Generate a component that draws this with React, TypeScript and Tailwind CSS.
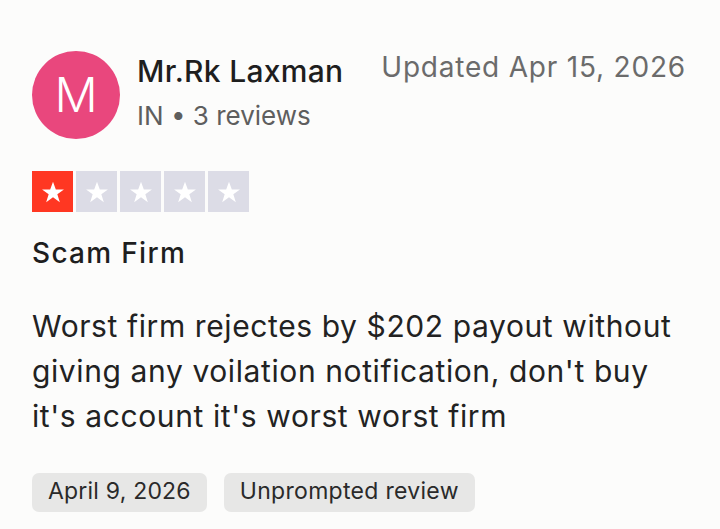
function Stars({ rating }: { rating: number }) {
  return (
    <div className="flex gap-[3px]">
      {[1, 2, 3, 4, 5].map((i) => (
        <div
          key={i}
          className={`flex h-[41px] w-[41px] items-center justify-center ${
            i <= rating ? "bg-[#ff3722]" : "bg-[#dcdce6]"
          }`}
        >
          <svg viewBox="0 0 24 24" className="h-[26px] w-[26px]" fill="#ffffff">
            <path d="M12 2.5l2.6 7.1h7.5l-6.1 4.5 2.3 7.3L12 16.9l-6.3 4.5 2.3-7.3-6.1-4.5h7.5z" />
          </svg>
        </div>
      ))}
    </div>
  );
}

export default function App() {
  return (
    <div
      className="h-[529px] w-[720px] overflow-hidden bg-[#fcfcfb] px-8 pt-[51px] text-[#1e1e1e]"
      style={{ fontFamily: "Inter, 'Noto Sans', sans-serif" }}
    >
      {/* Header */}
      <div className="flex items-start">
        <div className="flex h-[88px] w-[88px] shrink-0 items-center justify-center rounded-full bg-[#e9477d] text-[48px] font-light leading-none text-white">
          M
        </div>
        <div className="ml-[17px] flex flex-col pt-[2px]">
          <span className="text-[30px] font-medium leading-[36px] tracking-[0.3px]">Mr.Rk Laxman</span>
          <span className="mt-[12px] text-[26px] leading-[30px] text-[#5e5e5e]">IN • 3 reviews</span>
        </div>
        <span className="ml-auto mr-[2px] text-[28px] leading-[32px] tracking-[0.8px] text-[#6b6b6b]">
          Updated Apr 15, 2026
        </span>
      </div>

      {/* Rating */}
      <div className="mt-[32px]">
        <Stars rating={1} />
      </div>

      <h2 className="mt-[23px] text-[28px] font-medium leading-[36px] tracking-[1.3px]">Scam Firm</h2>

      <p className="mt-[33px] max-w-[656px] text-[30px] leading-[45px] tracking-[0.6px] text-[#222222]">
        Worst firm rejectes by $202 payout without giving any voilation notification, don't buy it's
        account it's worst worst firm
      </p>

      {/* Tags */}
      <div className="mt-[34px] flex gap-[17px]">
        <span className="rounded-[7px] bg-[#e7e7e6] px-[16px] pb-[6px] pt-[4px] text-[23px] leading-[29px] tracking-[0.2px] text-[#2a2a2a]">
          April 9, 2026
        </span>
        <span className="rounded-[7px] bg-[#e7e7e6] px-[16px] pb-[6px] pt-[4px] text-[23px] leading-[29px] tracking-[0.3px] text-[#2a2a2a]">
          Unprompted review
        </span>
      </div>
    </div>
  );
}
